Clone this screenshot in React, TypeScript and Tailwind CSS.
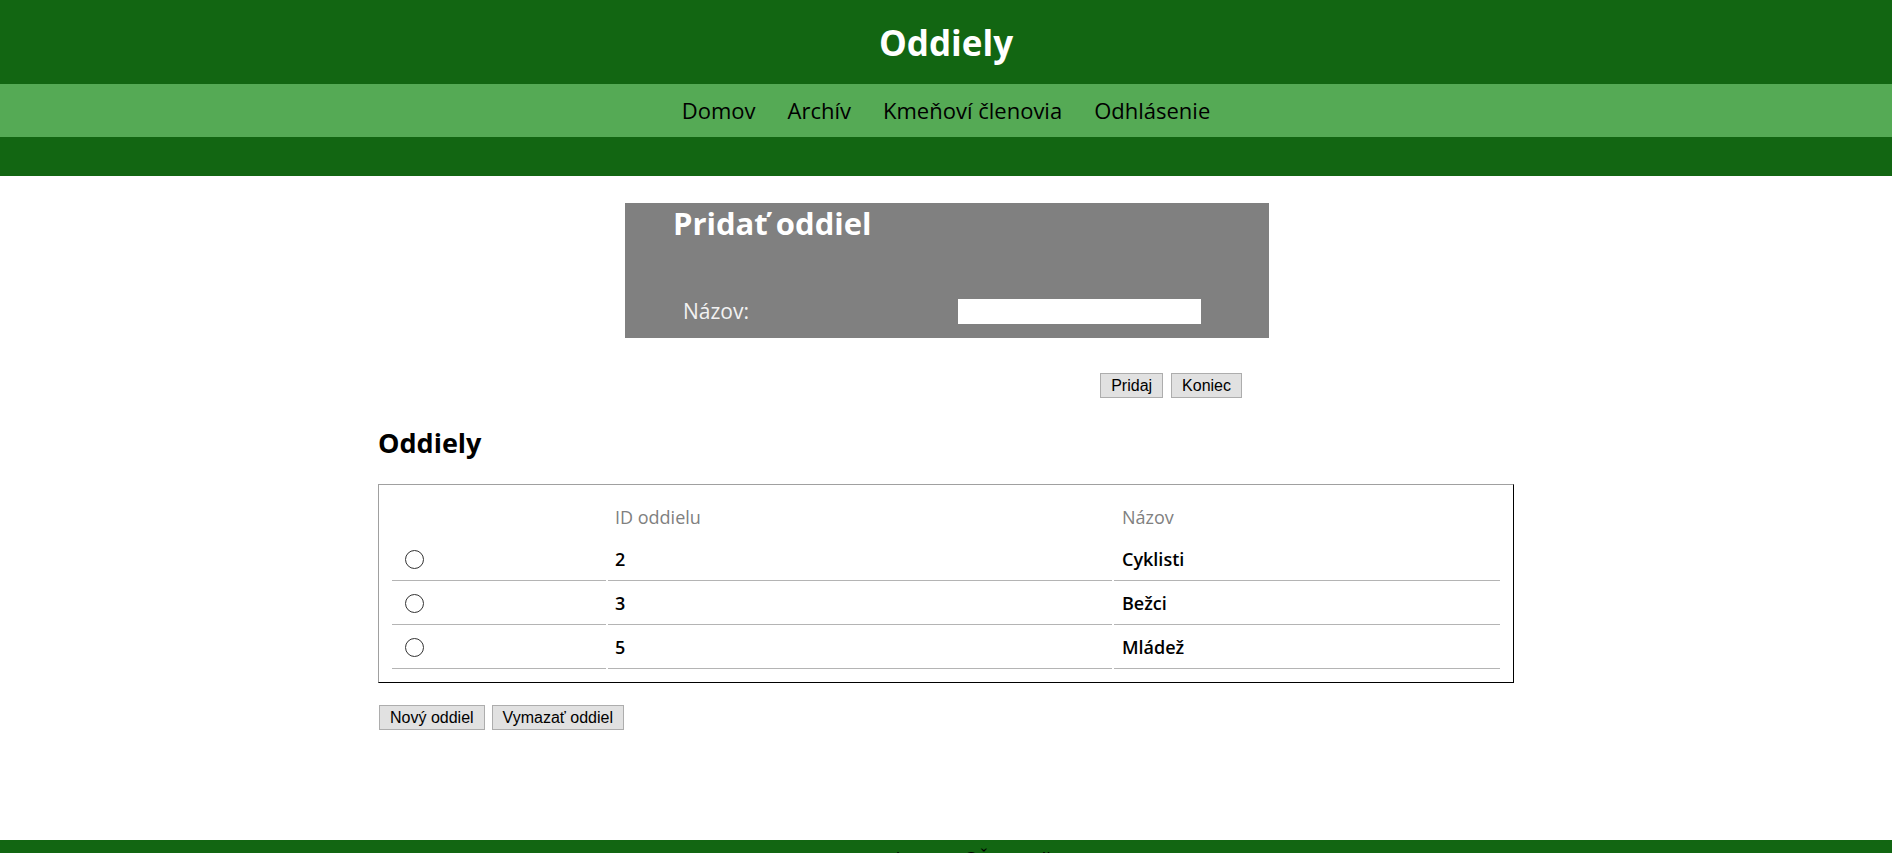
import React from 'react';

const font = { fontFamily: '"Open Sans", "DejaVu Sans", sans-serif' };

const navLinks = ['Domov', 'Archív', 'Kmeňoví členovia', 'Odhlásenie'];

const rows = [
  { id: '2', name: 'Cyklisti' },
  { id: '3', name: 'Bežci' },
  { id: '5', name: 'Mládež' },
];

const Btn: React.FC<{ children: React.ReactNode }> = ({ children }) => (
  <button className="h-[25px] px-[10px] bg-[#e1e1e1] border border-[#adadad] text-[16px] text-black font-['Liberation_Sans',sans-serif] leading-none">
    {children}
  </button>
);

const Radio: React.FC = () => (
  <span className="inline-block w-[19px] h-[19px] rounded-full border border-[#333] bg-white" />
);

const App: React.FC = () => {
  return (
    <div className="min-h-screen bg-white text-black" style={font}>
      {/* Header */}
      <header className="bg-[#126612]">
        <div className="h-[84px] flex items-center justify-center">
          <h1 className="text-[35px] font-bold text-white leading-none">Oddiely</h1>
        </div>
        <nav className="h-[53px] bg-[#55aa55] flex items-center justify-center">
          {navLinks.map((l) => (
            <a key={l} href="#" className="px-[16px] text-[22px] text-black">
              {l}
            </a>
          ))}
        </nav>
        <div className="h-[39px]" />
      </header>

      <main className="w-[1136px] mx-auto">
        {/* Form */}
        <div className="w-[644px] ml-[247px] mt-[27px]">
          <div className="h-[135px] bg-[#808080] flex flex-col px-[48px] pb-[11px]">
            <h2 className="text-[31px] font-bold text-white leading-[40px]">Pridať oddiel</h2>
            <div className="mt-auto flex items-center">
              <label className="w-[285px] pl-[10px] text-[21px] text-[#f2f2f2]">Názov:</label>
              <input type="text" className="w-[243px] h-[25px] bg-white outline-none border-0" />
            </div>
          </div>
          <div className="flex justify-end gap-[8px] pr-[27px] mt-[35px]">
            <Btn>Pridaj</Btn>
            <Btn>Koniec</Btn>
          </div>
        </div>

        {/* List */}
        <h2 className="mt-[30px] text-[27px] font-bold leading-[30px]">Oddiely</h2>
        <div className="mt-[26px] border border-t-[#a0a0a0] border-l-[#a0a0a0] border-r-black border-b-black px-[11px] pt-[10px] pb-[11px]">
          <table className="w-full border-separate border-spacing-[2px]">
            <thead>
              <tr className="h-[40px]">
                <th className="w-[214px]" />
                <th className="w-[504px] text-left pl-[7px] font-normal text-[18px] text-[#808080]">ID oddielu</th>
                <th className="text-left pl-[8px] font-normal text-[18px] text-[#808080]">Názov</th>
              </tr>
            </thead>
            <tbody>
              {rows.map((r) => (
                <tr key={r.id} className="h-[42px]">
                  <td className="border-b border-[#b4b4b4] pl-[13px] align-middle">
                    <div className="flex items-center">
                      <Radio />
                    </div>
                  </td>
                  <td className="border-b border-[#b4b4b4] pl-[7px] text-[18px] font-semibold">{r.id}</td>
                  <td className="border-b border-[#b4b4b4] pl-[8px] text-[18px] font-semibold">{r.name}</td>
                </tr>
              ))}
            </tbody>
          </table>
        </div>

        <div className="flex gap-[7px] mt-[22px] pl-[1px]">
          <Btn>Nový oddiel</Btn>
          <Btn>Vymazať oddiel</Btn>
        </div>
      </main>

      {/* Footer */}
      <footer className="mt-[110px] bg-[#126612] pt-[6px] pb-[10px] text-center text-[18px] text-black">
        <a href="#" className="text-[#551a8b] font-bold">TK</a> copyright 2015 ©ŠK Sandberg
      </footer>
    </div>
  );
};

export default App;
